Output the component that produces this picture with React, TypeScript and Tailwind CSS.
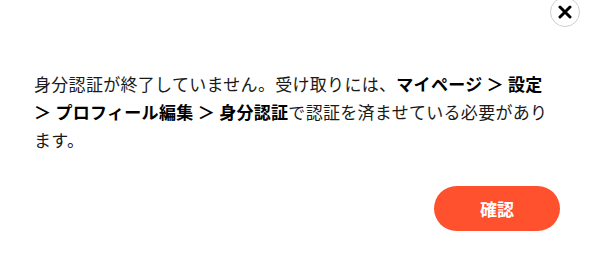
import React from "react";

export default function App() {
  return (
    <div className="relative w-[594px] h-[262px] bg-white overflow-hidden" style={{ fontFamily: '"Noto Sans CJK JP", "Noto Sans", sans-serif' }}>
      <button className="absolute left-[550px] top-[-3px] w-[30px] h-[30px] rounded-full border border-[#cfcfcf] bg-white flex items-center justify-center">
        <svg width="14" height="14" viewBox="0 0 14 14">
          <path d="M2 2 L12 12 M12 2 L2 12" stroke="#000" strokeWidth="3" strokeLinecap="round" />
        </svg>
      </button>
      <div className="pt-[70px] pl-[34px] w-[560px]">
        <p className="text-[17px] leading-[28px] text-[#1a1a1a] tracking-[0.3px] w-[524px]">
          身分認証が終了していません。受け取りには、<b className="font-bold text-black">マイページ ＞ 設定 ＞ プロフィール編集 ＞ 身分認証</b>で認証を済ませている必要があります。
        </p>
        <div className="flex justify-end w-[526px] mt-[32px]">
          <button className="w-[126px] h-[45px] rounded-full bg-[#ff512d] text-white font-bold text-[17px] flex items-center justify-center">
            確認
          </button>
        </div>
      </div>
    </div>
  );
}
